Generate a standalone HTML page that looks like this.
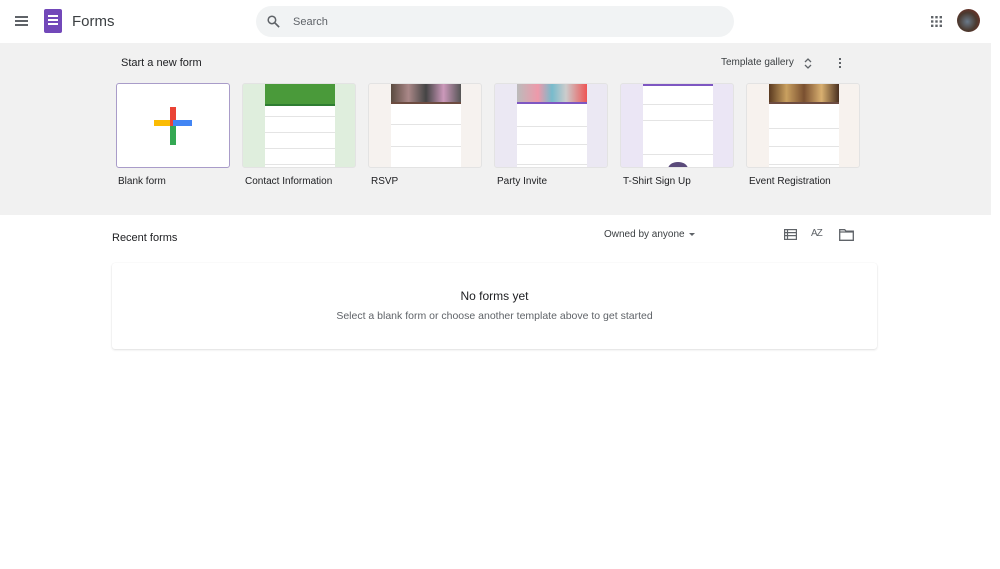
<!DOCTYPE html>
<html><head><style>
*{box-sizing:border-box;margin:0;padding:0}
body{width:1000px;height:569px;background:#fff;font-family:"Liberation Sans",Arial,sans-serif;color:#202124;position:relative;overflow:hidden}
.abs{position:absolute}
.gray{left:0;top:43px;width:991px;height:172px;background:#f1f1f1}
.card{top:83px;width:114px;height:85px;border:1px solid #dadce0;border-radius:3px;overflow:hidden;background:#fff}
.lbl{top:176px;font-size:10px;color:#202124}
.form{position:absolute;left:22px;top:0;width:70px;height:85px;background:#fff}
.ln{position:absolute;height:1px;background:#e4e4e4;left:0;right:0}
</style></head><body>
<div class="abs" style="left:15px;top:16px;width:13px;height:2px;background:#5f6368;box-shadow:0 4px 0 #5f6368,0 8px 0 #5f6368"></div>
<div class="abs" style="left:44px;top:9px;width:18px;height:24px;background:#7248b9;border-radius:2px"></div>
<div class="abs" style="left:48px;top:15px;width:10px;height:2px;background:#fff;box-shadow:0 4px 0 #fff,0 8px 0 #fff"></div>
<div class="abs" style="left:72px;top:13px;font-size:15px;color:#3c4043">Forms</div>
<div class="abs" style="left:256px;top:6px;width:478px;height:31px;background:#f1f3f4;border-radius:16px"></div>
<svg class="abs" style="left:266px;top:14px" width="15" height="15" viewBox="0 0 24 24"><circle cx="9.5" cy="9.5" r="6" fill="none" stroke="#5f6368" stroke-width="2.4"/><path d="M14 14l7 7" stroke="#5f6368" stroke-width="2.6"/></svg>
<div class="abs" style="left:293px;top:16px;font-size:11px;color:#5f6368">Search</div>
<svg class="abs" style="left:931px;top:16px" width="11" height="11" viewBox="0 0 11 11" fill="#5f6368"><rect x="0" y="0" width="2.4" height="2.4"/><rect x="4.3" y="0" width="2.4" height="2.4"/><rect x="8.6" y="0" width="2.4" height="2.4"/><rect x="0" y="4.3" width="2.4" height="2.4"/><rect x="4.3" y="4.3" width="2.4" height="2.4"/><rect x="8.6" y="4.3" width="2.4" height="2.4"/><rect x="0" y="8.6" width="2.4" height="2.4"/><rect x="4.3" y="8.6" width="2.4" height="2.4"/><rect x="8.6" y="8.6" width="2.4" height="2.4"/></svg>
<div class="abs" style="left:957px;top:9px;width:23px;height:23px;border-radius:50%;background:radial-gradient(circle at 45% 55%,#6a7a8a 0,#4a3a30 50%,#8a2a20 100%)"></div>
<div class="abs gray"></div>
<div class="abs" style="left:121px;top:57px;font-size:11px">Start a new form</div>
<div class="abs" style="left:721px;top:57px;font-size:10px;color:#3c4043">Template gallery</div>
<svg class="abs" style="left:803px;top:57px" width="10" height="13" viewBox="0 0 10 13"><path d="M2 5l3-3 3 3M2 8l3 3 3-3" fill="none" stroke="#5f6368" stroke-width="1.3"/></svg>
<div class="abs" style="left:839px;top:58px;width:2px;height:2px;background:#5f6368;box-shadow:0 4px 0 #5f6368,0 8px 0 #5f6368"></div>
<div class="abs card" style="left:116px;border-color:#a99cc9">
 <div class="abs" style="left:37px;top:36px;width:38px;height:6px;background:#fbbc04"></div>
 <div class="abs" style="left:53px;top:23px;width:6px;height:20px;background:#ea4335"></div>
 <div class="abs" style="left:56px;top:36px;width:19px;height:6px;background:#4285f4"></div>
 <div class="abs" style="left:53px;top:42px;width:6px;height:19px;background:#34a853"></div>
</div>
<div class="abs card" style="left:242px;background:#dfeedd;border-color:#e3e3e3"><div class="form"><div style="height:20px;background:#4a9a3a"></div><div style="height:2px;background:#2e7d32"></div><div class="ln" style="top:32px"></div><div class="ln" style="top:48px"></div><div class="ln" style="top:64px"></div><div class="ln" style="top:80px"></div></div></div>
<div class="abs card" style="left:368px;background:#f6f2ef;border-color:#e3e3e3"><div class="form"><div style="height:18px;background:linear-gradient(90deg,#5a4a40,#a88,#444,#c9b,#555)"></div><div style="height:2px;background:#6d4c41"></div><div class="ln" style="top:40px"></div><div class="ln" style="top:62px"></div></div></div>
<div class="abs card" style="left:494px;background:#ebe8f3;border-color:#e3e3e3"><div class="form"><div style="height:18px;background:linear-gradient(90deg,#bbb,#e9a 30%,#7bc 50%,#ccc 70%,#e55)"></div><div style="height:2px;background:#7e57c2"></div><div class="ln" style="top:42px"></div><div class="ln" style="top:60px"></div><div class="ln" style="top:80px"></div></div></div>
<div class="abs card" style="left:620px;background:#ebe6f5;border-color:#e3e3e3"><div class="form"><div style="height:2px;background:#7e57c2"></div><div class="ln" style="top:20px"></div><div class="ln" style="top:36px"></div><div class="ln" style="top:70px"></div><div class="abs" style="left:25px;top:78px;width:20px;height:14px;border-radius:50%;background:#5a4a7a"></div></div></div>
<div class="abs card" style="left:746px;background:#f7f2ee;border-color:#e3e3e3"><div class="form"><div style="height:18px;background:linear-gradient(90deg,#5a3a20,#c9a060,#7a5030,#d9b070,#4a3020)"></div><div style="height:2px;background:#6d4c41"></div><div class="ln" style="top:44px"></div><div class="ln" style="top:62px"></div><div class="ln" style="top:80px"></div></div></div>
<div class="abs lbl" style="left:118px">Blank form</div>
<div class="abs lbl" style="left:245px">Contact Information</div>
<div class="abs lbl" style="left:371px">RSVP</div>
<div class="abs lbl" style="left:497px">Party Invite</div>
<div class="abs lbl" style="left:623px">T-Shirt Sign Up</div>
<div class="abs lbl" style="left:749px">Event Registration</div>
<div class="abs" style="left:112px;top:232px;font-size:11px">Recent forms</div>
<div class="abs" style="left:604px;top:229px;font-size:10px;color:#3c4043">Owned by anyone</div>
<div class="abs" style="left:689px;top:233px;width:0;height:0;border-left:3.5px solid transparent;border-right:3.5px solid transparent;border-top:3.5px solid #5f6368"></div>
<svg class="abs" style="left:784px;top:229px" width="13" height="11" viewBox="0 0 13 11"><rect x=".6" y=".6" width="11.8" height="9.8" fill="none" stroke="#5f6368" stroke-width="1.2"/><path d="M.6 3.6h11.8M.6 6.6h11.8M3.5.6v9.8" stroke="#5f6368" stroke-width="1.2"/></svg>
<div class="abs" style="left:811px;top:228px;font-size:10px;color:#5f6368;letter-spacing:-1px">AZ</div>
<svg class="abs" style="left:839px;top:229px" width="15" height="12" viewBox="0 0 15 12"><path d="M.7.7h5l1.3 1.5h7.3v9.1H.7z" fill="none" stroke="#5f6368" stroke-width="1.3"/><path d="M.7 3h13.6" stroke="#5f6368" stroke-width="1.2"/></svg>
<div class="abs" style="left:112px;top:263px;width:765px;height:86px;border-radius:3px;box-shadow:0 1px 2px rgba(0,0,0,.12),0 0 1px rgba(0,0,0,.08)"></div>
<div class="abs" style="left:112px;top:289px;width:765px;text-align:center;font-size:12px">No forms yet</div>
<div class="abs" style="left:112px;top:310px;width:765px;text-align:center;font-size:10.5px;color:#5f6368">Select a blank form or choose another template above to get started</div>
</body></html>
